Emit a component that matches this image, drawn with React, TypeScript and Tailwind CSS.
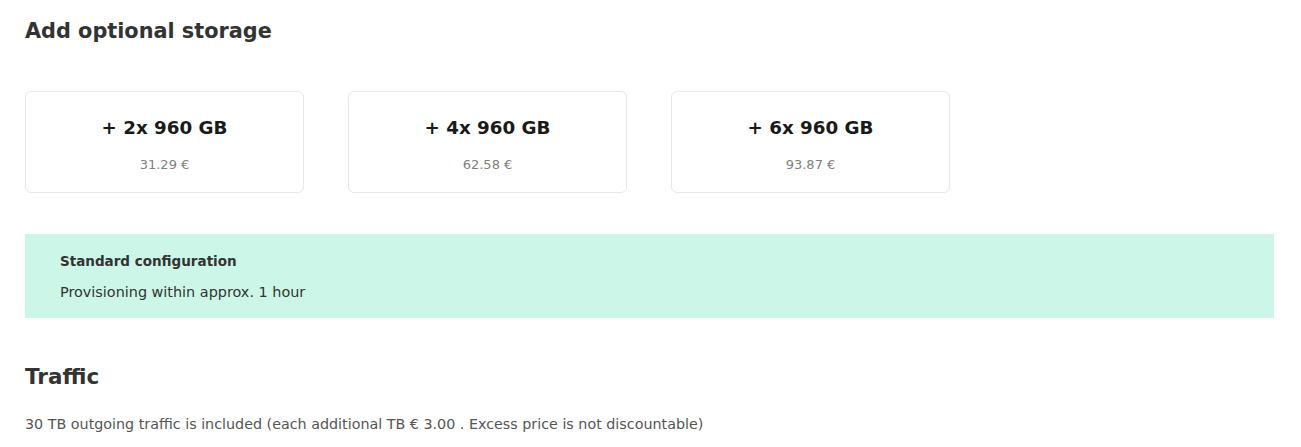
import React from "react";

const cards = [
  { title: "+ 2x 960 GB", price: "31.29 €" },
  { title: "+ 4x 960 GB", price: "62.58 €" },
  { title: "+ 6x 960 GB", price: "93.87 €" },
];

export default function App() {
  return (
    <div
      className="w-[1301px] h-[447px] bg-white pl-[25px] pr-[27px] pt-[17px] text-[#333]"
      style={{ fontFamily: '"DejaVu Sans", sans-serif' }}
    >
      <h2 className="text-[20.8px] leading-[28px] font-bold text-[#333]">Add optional storage</h2>
      <div className="mt-[46px] flex gap-[44px]">
        {cards.map((c) => (
          <div
            key={c.title}
            className="w-[279px] h-[102px] rounded-[6px] border border-[#e6e8ea] flex flex-col items-center pt-[23px]"
          >
            <div className="text-[18.3px] leading-[26px] font-bold text-[#1a1a1a]">{c.title}</div>
            <div className="mt-[15px] text-[13px] leading-[18px] text-[#808080]">{c.price}</div>
          </div>
        ))}
      </div>
      <div className="mt-[41px] h-[84px] bg-[#ccf7e8] pl-[35px] pt-[18px]">
        <div className="text-[13.5px] leading-[18px] font-bold text-[#333]">Standard configuration</div>
        <div className="mt-[13px] text-[14.4px] leading-[18px] text-[#333]">Provisioning within approx. 1 hour</div>
      </div>
      <h2 className="mt-[45px] text-[21.5px] leading-[28px] font-bold text-[#333]">Traffic</h2>
      <p className="mt-[24px] text-[14.3px] leading-[18px] text-[#555]">
        30 TB outgoing traffic is included (each additional TB € 3.00 . Excess price is not discountable)
      </p>
    </div>
  );
}
